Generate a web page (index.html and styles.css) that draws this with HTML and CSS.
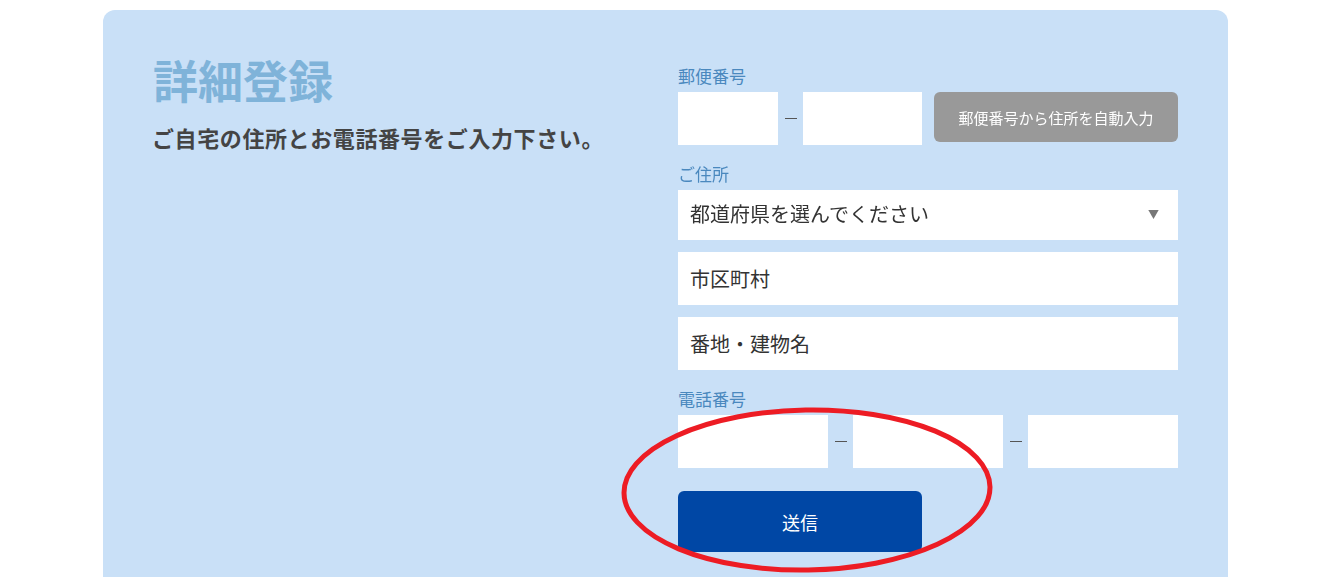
FILE: index.html
```html
<!DOCTYPE html>
<html lang="ja">
<head>
    <meta charset="UTF-8">
    <meta name="viewport" content="width=device-width, initial-scale=1.0">
    <title>詳細登録</title>
    <link rel="stylesheet" href="styles.css">
</head>
<body>
    <div class="card">
        <section class="intro">
            <h1>詳細登録</h1>
            <p>ご自宅の住所とお電話番号をご入力下さい。</p>
        </section>

        <form class="detail-form">
            <div class="field">
                <label for="zip1">郵便番号</label>
                <div class="row">
                    <input type="text" id="zip1" class="zip-first" autofocus>
                    <span class="dash"></span>
                    <input type="text" id="zip2" class="zip-second">
                    <button type="button" class="auto-btn">郵便番号から住所を自動入力</button>
                </div>
            </div>

            <div class="field">
                <label for="pref">ご住所</label>
                <div class="select-wrap">
                    <select id="pref">
                        <option>都道府県を選んでください</option>
                    </select>
                </div>
                <input type="text" class="full" placeholder="市区町村">
                <input type="text" class="full" placeholder="番地・建物名">
            </div>

            <div class="field">
                <label for="tel1">電話番号</label>
                <div class="row">
                    <input type="text" id="tel1" class="tel">
                    <span class="dash"></span>
                    <input type="text" class="tel">
                    <span class="dash"></span>
                    <input type="text" class="tel">
                </div>
            </div>

            <button type="submit" class="submit-btn">送信</button>
        </form>
    </div>

    <!-- hand-drawn highlight round the submit button -->
    <svg class="marker" width="400" height="180" viewBox="0 0 400 180">
        <ellipse cx="192" cy="88" rx="183" ry="80" fill="none" stroke="#ed1c24" stroke-width="5" transform="rotate(-1 192 88)"/>
    </svg>
</body>
</html>
```

FILE: styles.css
```css
* {
    margin: 0;
    padding: 0;
    box-sizing: border-box;
}

body {
    font-family: "Noto Sans CJK JP", "Noto Sans", sans-serif;
    background-color: #fff;
    color: #333;
    position: relative;
    overflow: hidden;
    height: 577px;
}

.card {
    width: 1125px;
    margin: 10px 0 0 103px;
    background-color: #c9e0f7;
    border-radius: 12px;
    padding: 46px 50px 60px 52px;
    display: grid;
    grid-template-columns: 1fr 500px;
}

.intro h1 {
    font-size: 45px;
    line-height: 48px;
    font-weight: bold;
    color: #7fb3d9;
    margin-left: -2px;
}

.intro p {
    margin-top: 18px;
    font-size: 22px;
    line-height: 30px;
    font-weight: bold;
    color: #444;
    letter-spacing: 0.6px;
    margin-left: -3px;
}

.detail-form {
    padding-top: 8px;
}

.field + .field {
    margin-top: 17px;
}

.field label {
    display: block;
    font-size: 17px;
    line-height: 24px;
    margin-bottom: 4px;
    color: #4a88be;
}

.row {
    display: flex;
    align-items: flex-start;
}

input,
select {
    font-family: inherit;
    font-size: 20px;
    color: #333;
    border: none;
    outline: none;
    background-color: #fff;
    height: 53px;
    padding: 0 12px;
}

input::placeholder {
    color: #333;
    opacity: 1;
}

.zip-first {
    width: 100px;
}

.zip-second {
    width: 119px;
}

.tel {
    width: 150px;
}

.dash {
    width: 25px;
    height: 53px;
    display: flex;
    align-items: center;
    justify-content: center;
}

.dash::before {
    content: "";
    width: 12px;
    height: 1px;
    background-color: #555;
}

.auto-btn {
    flex: 1;
    margin-left: 12px;
    height: 50px;
    background-color: #999;
    color: #fff;
    border: none;
    border-radius: 6px;
    font-family: inherit;
    font-size: 15px;
    cursor: pointer;
}

.select-wrap {
    position: relative;
}

.select-wrap select {
    width: 100%;
    height: 50px;
    appearance: none;
    -webkit-appearance: none;
    padding-bottom: 4px;
}

.select-wrap::after {
    content: "▼";
    position: absolute;
    right: 19px;
    top: 16px;
    font-size: 11px;
    color: #777;
    pointer-events: none;
}

.full {
    display: block;
    width: 100%;
    margin-top: 12px;
}

.submit-btn {
    display: block;
    margin-top: 23px;
    width: 244px;
    height: 61px;
    background-color: #0047a5;
    color: #fff;
    border: none;
    border-radius: 6px;
    font-family: inherit;
    font-size: 18px;
    cursor: pointer;
}

.marker {
    position: absolute;
    left: 615px;
    top: 402px;
    pointer-events: none;
}
```
